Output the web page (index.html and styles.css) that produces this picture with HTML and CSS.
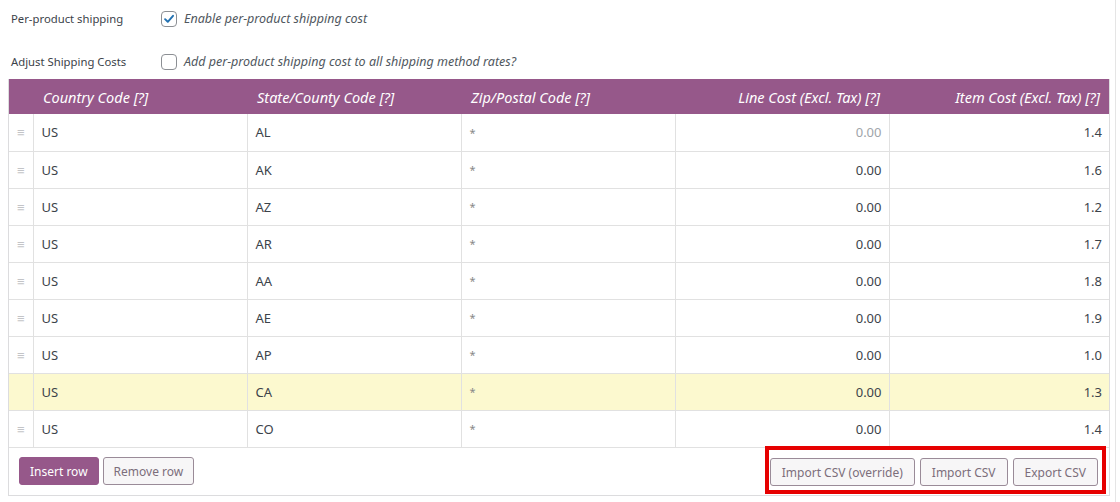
FILE: index.html
```html
<!DOCTYPE html>
<html lang="en">
<head>
  <meta charset="UTF-8" />
  <title>Per-product shipping</title>
  <link rel="stylesheet" href="styles.css">
</head>
<body>
  <div class="settings">
    <div class="field-row">
      <span class="field-label">Per-product shipping</span>
      <label class="check"><span class="box checked"><svg viewBox="0 0 16 16" width="14" height="14"><path d="M3.5 8.2 L6.6 11.2 L12.6 4.3" fill="none" stroke="#2271b1" stroke-width="2.2" stroke-linecap="round" stroke-linejoin="round"/></svg></span><em>Enable per-product shipping cost</em></label>
    </div>
    <div class="field-row">
      <span class="field-label">Adjust Shipping Costs</span>
      <label class="check"><span class="box"></span><em>Add per-product shipping cost to all shipping method rates?</em></label>
    </div>

    <div class="rates-wrap">
      <table class="rates">
        <colgroup>
          <col class="c-handle"><col class="c-code"><col class="c-code"><col class="c-code"><col class="c-code"><col class="c-last">
        </colgroup>
        <thead>
          <tr>
            <th></th>
            <th>Country Code [?]</th>
            <th>State/County Code [?]</th>
            <th>Zip/Postal Code [?]</th>
            <th class="num">Line Cost (Excl. Tax) [?]</th>
            <th class="num">Item Cost (Excl. Tax) [?]</th>
          </tr>
        </thead>
        <tbody id="rows"></tbody>
      </table>
      <div class="rates-foot">
        <div class="btns">
          <button class="btn primary">Insert row</button>
          <button class="btn">Remove row</button>
        </div>
        <div class="btns csv">
          <button class="btn">Import CSV (override)</button>
          <button class="btn">Import CSV</button>
          <button class="btn">Export CSV</button>
        </div>
      </div>
    </div>
  </div>

  <script>
    var rates = [
      ['US', 'AL', '1.4'], ['US', 'AK', '1.6'], ['US', 'AZ', '1.2'],
      ['US', 'AR', '1.7'], ['US', 'AA', '1.8'], ['US', 'AE', '1.9'],
      ['US', 'AP', '1.0'], ['US', 'CA', '1.3'], ['US', 'CO', '1.4']
    ];
    var tbody = document.getElementById('rows');
    rates.forEach(function (r, i) {
      var tr = document.createElement('tr');
      if (r[1] === 'CA') tr.className = 'current';
      tr.innerHTML =
        '<td class="handle">' + (r[1] === 'CA' ? '' : '&#8801;') + '</td>' +
        '<td>' + r[0] + '</td>' +
        '<td>' + r[1] + '</td>' +
        '<td class="star">*</td>' +
        '<td class="num' + (i === 0 ? ' muted' : '') + '">0.00</td>' +
        '<td class="num">' + r[2] + '</td>';
      tbody.appendChild(tr);
    });
  </script>
</body>
</html>
```

FILE: styles.css
```css
* { box-sizing: border-box; }
body {
  margin: 0;
  background: #fff;
  font-family: 'Noto Sans', 'Open Sans', sans-serif;
  font-size: 13px;
  color: #3c434a;
}
.settings {
  padding: 5px 6px 0 8px;
  border-right: 1px solid #e5e5e5;
  width: 1116px;
  min-height: 502px;
}
.field-row {
  display: flex;
  align-items: center;
  height: 27px;
  margin-bottom: 16px;
}
.field-row + .field-row { margin-bottom: 4px; }
.field-label {
  width: 153px;
  padding-left: 3px;
  font-size: 11.3px;
  color: #3c434a;
}
.check {
  display: flex;
  align-items: center;
  gap: 7px;
  font-size: 12.5px;
  color: #50575e;
}
.box {
  width: 16px;
  height: 16px;
  border: 1px solid #8c8f94;
  border-radius: 4px;
  display: flex;
  align-items: center;
  justify-content: center;
  background: #fff;
}
.rates-wrap {
  width: 1102px;
  border: 1px solid #dcdcde;
  border-top: 0;
}
.rates {
  width: 100%;
  border-collapse: collapse;
  table-layout: fixed;
}
.c-handle { width: 24px; }
.c-code { width: 214px; }
.rates th {
  background: #96588a;
  color: #fff;
  font-style: italic;
  font-weight: 400;
  height: 35px;
  text-align: left;
  padding: 0 10px;
  font-size: 14.5px;
  white-space: nowrap;
}
.rates th.num { text-align: right; padding-right: 9px; }
.rates td {
  height: 37px;
  border: 1px solid #e1e1e1;
  border-top: 0;
  padding: 0 8px;
  color: #3c434a;
  background: #fff;
}
.rates tr td:first-child { border-left: 0; }
.rates tr td:last-child { border-right: 0; }
.rates td.num { text-align: right; padding-right: 7px; }
.rates td.muted { color: #a0a5aa; }
.rates td.star { color: #888; font-size: 11px; }
.rates td.handle {
  padding: 0;
  text-align: center;
  color: #c3c4c7;
  font-size: 13px;
}
.rates tr.current td { background: #fcf9cf; }
.rates-foot {
  display: flex;
  justify-content: space-between;
  align-items: center;
  height: 47px;
  padding: 0 0 0 10px;
}
.btns {
  display: flex;
  gap: 4px;
}
.csv {
  border: 4px solid #e60000;
  padding: 8px 4px 4px 1px;
  gap: 5px;
  margin-top: -2px;
  margin-right: 3px;
}
.csv .btn { padding: 0 11px; }
.btn {
  font-family: inherit;
  font-size: 12px;
  height: 28px;
  padding: 0 10px;
  border: 1px solid #9a8b98;
  border-radius: 3px;
  background: #f7f6f7;
  color: #7c6e7b;
  cursor: pointer;
}
.btn.primary {
  background: #96588a;
  border-color: #96588a;
  color: #fff;
}
```
